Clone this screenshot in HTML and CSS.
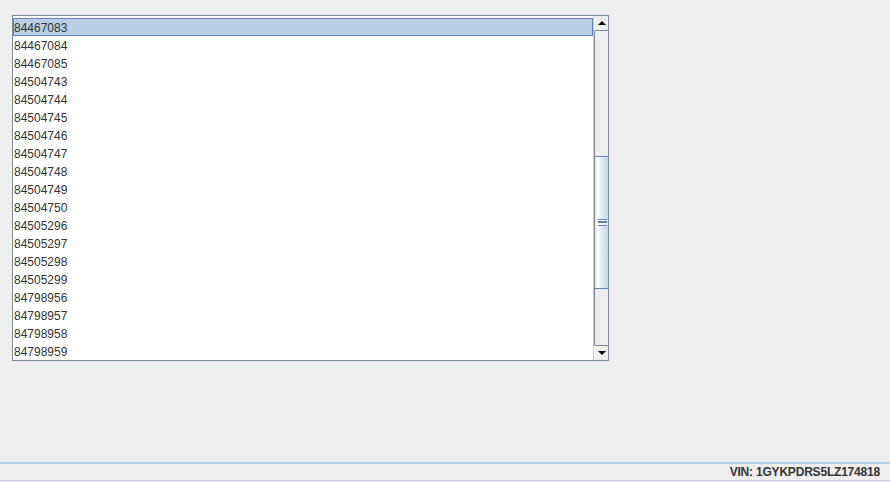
FILE: index.html
```html
<!DOCTYPE html>
<html>
<head>
<meta charset="utf-8">
<link rel="stylesheet" href="styles.css">
</head>
<body>
<div class="app">
  <div class="main">
    <div class="listbox">
      <div class="list">
        <div class="row selected">84467083</div>
        <div class="row">84467084</div>
        <div class="row">84467085</div>
        <div class="row">84504743</div>
        <div class="row">84504744</div>
        <div class="row">84504745</div>
        <div class="row">84504746</div>
        <div class="row">84504747</div>
        <div class="row">84504748</div>
        <div class="row">84504749</div>
        <div class="row">84504750</div>
        <div class="row">84505296</div>
        <div class="row">84505297</div>
        <div class="row">84505298</div>
        <div class="row">84505299</div>
        <div class="row">84798956</div>
        <div class="row">84798957</div>
        <div class="row">84798958</div>
        <div class="row">84798959</div>
      </div>
      <div class="scrollbar">
        <div class="btn up"><span class="tri-up"></span></div>
        <div class="track">
          <div class="space-top"></div>
          <div class="thumb"><span class="grip"></span></div>
          <div class="space-bottom"></div>
        </div>
        <div class="btn down"><span class="tri-down"></span></div>
      </div>
    </div>
  </div>
  <div class="status">
    <span class="vin">VIN: 1GYKPDRS5LZ174818</span>
  </div>
</div>
</body>
</html>
```
FILE: styles.css
```css
html, body {
  margin: 0;
  padding: 0;
  background: #eeeeee;
}
body {
  font-family: "Liberation Sans", Arial, sans-serif;
  font-size: 12px;
  color: #333333;
}
.app {
  width: 890px;
  height: 482px;
  display: flex;
  flex-direction: column;
}
.main {
  flex: 1;
  padding: 15px 0 0 12px;
}
.listbox {
  width: 595px;
  height: 344px;
  border: 1px solid #7a8a99;
  display: flex;
  background: #ffffff;
}
.list {
  flex: 1;
  overflow: hidden;
  padding-top: 2px;
}
.row {
  height: 17px;
  padding-top: 1px;
  line-height: 18px;
  padding-left: 0;
  margin-left: 1px;
  white-space: nowrap;
}
.row.selected {
  margin-left: 0;
  background: #b8cfe5;
  border: 1px solid #6382bf;
  height: 15px;
  padding-top: 1px;
  line-height: 16px;
}
.scrollbar {
  width: 14px;
  display: flex;
  flex-direction: column;
  background: #eeeeee;
  border-left: 1px solid #b8cfe5;
}
.btn {
  height: 15px;
  display: flex;
  align-items: center;
  justify-content: center;
  background: #eeeeee;
  box-sizing: border-box;
}
.btn.up {
  border-bottom: 1px solid #7a8a99;
  border-left: 1px solid #ffffff;
}
.btn.down {
  border-top: 1px solid #7a8a99;
  border-left: 1px solid #ffffff;
}
.tri-up {
  width: 0;
  height: 0;
  border-left: 4px solid transparent;
  border-right: 4px solid transparent;
  border-bottom: 4px solid #000000;
}
.tri-down {
  width: 0;
  height: 0;
  border-left: 4px solid transparent;
  border-right: 4px solid transparent;
  border-top: 4px solid #000000;
}
.track {
  flex: 1;
  display: flex;
  flex-direction: column;
  border-left: 1px solid #7a8a99;
}
.space-top {
  height: 125px;
}
.space-bottom {
  flex: 1;
}
.thumb {
  height: 133px;
  box-sizing: border-box;
  border-top: 1px solid #6382bf;
  border-bottom: 1px solid #6382bf;
  background: linear-gradient(to right, #dde8f3 0px, #ffffff 3px, #e4edf6 6px, #c4d7ea 13px);
  display: flex;
  align-items: center;
  justify-content: center;
}
.grip {
  width: 9px;
  height: 5px;
  border-top: 1px solid #6382bf;
  border-bottom: 1px solid #6382bf;
  background: linear-gradient(to bottom, #ffffff 0 1px, #6382bf 1px 3px, #ffffff 3px 5px);
  margin-left: 1px;
}
.status {
  height: 16px;
  border-top: 2px solid #b8cfe5;
  border-bottom: 1px solid #b8cfe5;
  margin-bottom: 1px;
  display: flex;
  align-items: center;
  justify-content: flex-end;
  padding-right: 10px;
}
.vin {
  font-weight: bold;
  font-size: 12px;
  letter-spacing: -0.2px;
  color: #333333;
}
```
